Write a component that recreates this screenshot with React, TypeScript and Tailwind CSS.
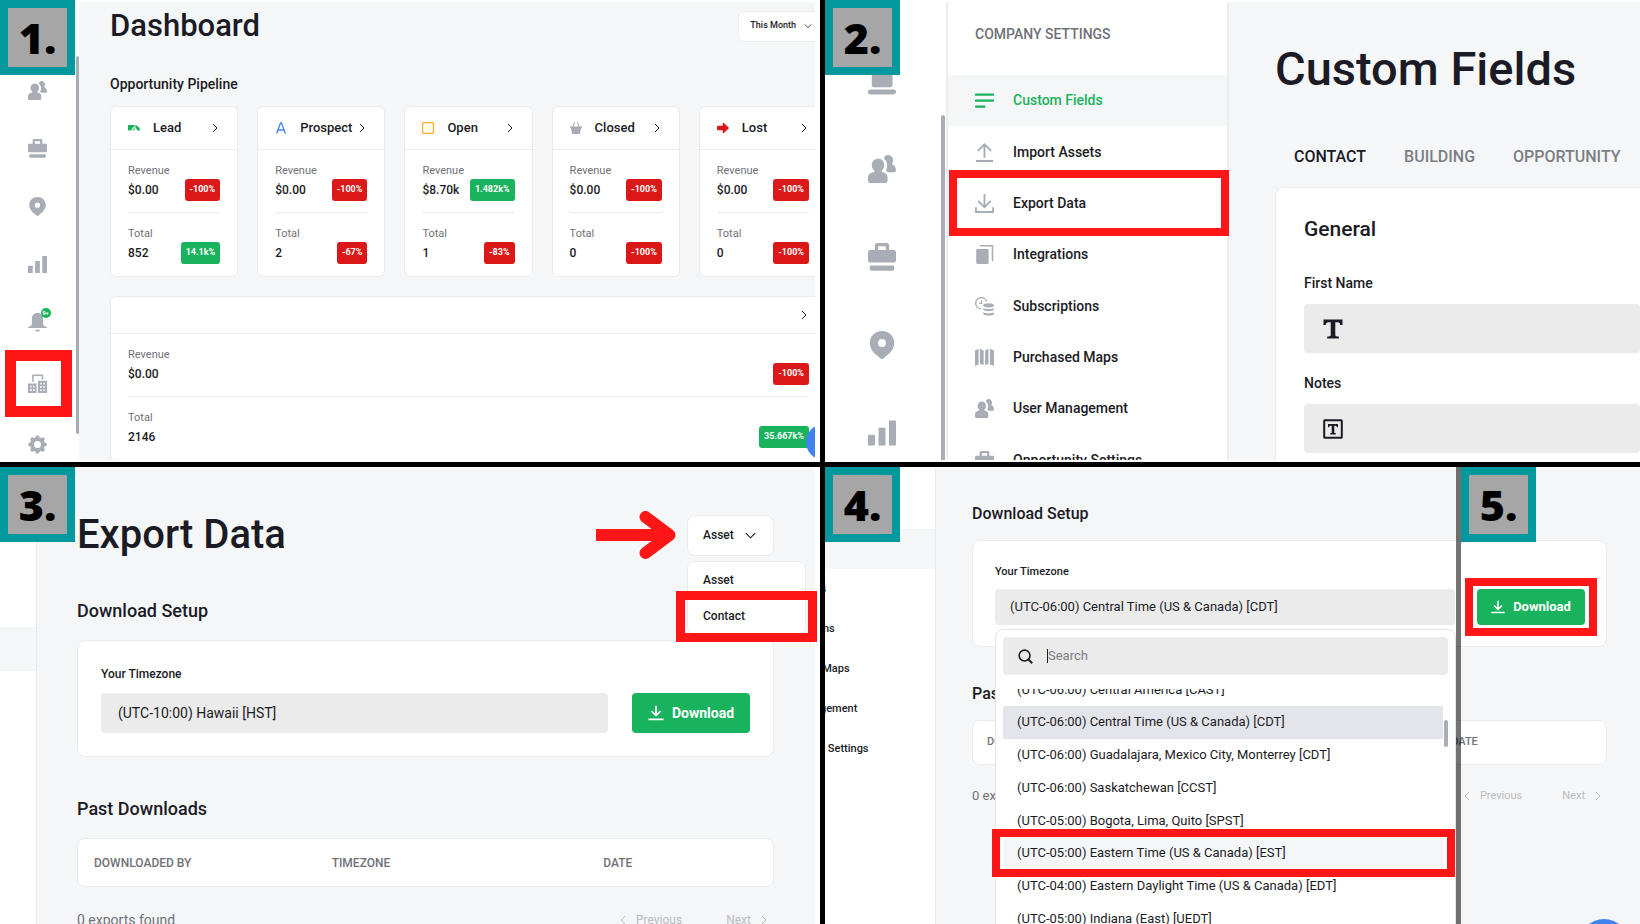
import type { ReactNode } from 'react';
import clsx from 'clsx';

/* ---------- Icons ---------- */

type IconProps = { className?: string };

function Svg({ className, children, box = '0 0 20 20' }: IconProps & { children: ReactNode; box?: string }) {
  return (
    <svg viewBox={box} className={clsx('shrink-0', className)} fill="currentColor" aria-hidden="true">
      {children}
    </svg>
  );
}

const UsersIcon = (p: IconProps) => (
  <Svg {...p}>
    <path d="M7.300 2.600C10 2.600 11.600 4.500 11.600 7.300c0 1.700-.8 3-1.700 3.700v1.100c2.500.5 4.100 1.700 4.100 4v2c0 1.100-.6 1.900-1.500 1.900h-11C.6 20 0 19.200 0 18.100v-2c0-2.300 1.700-3.500 4.500-4v-1.100c-1-.7-1.800-2-1.800-3.700 0-2.800 1.900-4.700 4.600-4.700z" />
    <path d="M14 0c2.400 0 3.900 1.700 3.900 3.800 0 1-.3 1.900-.8 2.600 1.800.9 2.900 2.400 2.900 4.300 0 1-.6 1.600-1.300 1.600h-4.500c-.4-.4-.8-.7-1.400-1 .6-1.100.9-2.400.9-3.900 0-1.900-.8-3.500-2.300-4.700C11.700 1 12.600 0 14 0z" />
  </Svg>
);

const BriefcaseIcon = (p: IconProps) => (
  <Svg {...p}>
    <path
      fillRule="evenodd"
      d="M6.500 0h7c.9 0 1.600.7 1.600 1.600V5h3.400c.8 0 1.500.7 1.500 1.500v6c0 .8-.7 1.500-1.500 1.500h-17C.7 14 0 13.300 0 12.500v-6C0 5.700.7 5 1.500 5h3.400V1.600C4.900.7 5.600 0 6.500 0zM7.300 2.300V5h5.400V2.300H7.300z"
    />
    <rect x="1.300" y="16" width="17.400" height="3.800" rx="1" />
  </Svg>
);

const PinIcon = (p: IconProps) => (
  <Svg {...p}>
    <path
      fillRule="evenodd"
      d="M10 0c5 0 8.700 3.700 8.700 8.500 0 4.300-2.700 7-5.500 9.200L11 19.600c-.6.500-1.400.5-2 0l-2.200-1.900C4 15.500 1.300 12.800 1.300 8.500 1.300 3.700 5 0 10 0zm0 5.800a2.800 2.800 0 1 0 0 5.600 2.800 2.800 0 0 0 0-5.600z"
    />
  </Svg>
);

const BarsIcon = (p: IconProps) => (
  <Svg {...p}>
    <rect x="0" y="11.200" width="5" height="7.800" rx=".4" />
    <rect x="7.500" y="6.300" width="5" height="12.700" rx=".4" />
    <rect x="15" y="1" width="5" height="18" rx=".4" />
  </Svg>
);

const BellIcon = (p: IconProps) => (
  <Svg {...p}>
    <path d="M10 0c3.900 0 5.900 2.600 5.900 6v5.200c0 1.500 1.200 2.400 3 3.200.7.300 1.100.7 1.100 1.400H0c0-.7.400-1.100 1.100-1.400 1.800-.8 3-1.700 3-3.200V6C4.100 2.600 6.100 0 10 0z" />
    <path d="M7.200 17.500h5.600c-.4 1.200-1.400 2-2.800 2s-2.400-.8-2.800-2z" />
  </Svg>
);

const BuildingsIcon = (p: IconProps) => (
  <Svg {...p}>
    <path d="M5.200 8.300V1.400h10v4.500" fill="none" stroke="currentColor" strokeWidth="1.600" />
    <path
      fillRule="evenodd"
      d="M0 10h9v10H0V10zm2.300 2.300v1.900h1.600v-1.900H2.300zm3 0v1.900h1.600v-1.900H5.300zm-3 3.600v1.900h1.600v-1.900H2.300zm3 0v1.900h1.600v-1.900H5.300z"
    />
    <path
      fillRule="evenodd"
      d="M10.500 7H20v13h-9.500V7zm2.300 2.200v1.800h1.700V9.200h-1.700zm3.300 0v1.800h1.700V9.200h-1.700zm-3.300 3.500v1.800h1.700v-1.800h-1.700zm3.300 0v1.800h1.700v-1.800h-1.700zm-3.300 3.500V18h1.700v-1.800h-1.700zm3.300 0V18h1.700v-1.800h-1.700z"
    />
  </Svg>
);

const GearIcon = (p: IconProps) => (
  <Svg {...p}>
    <circle cx="10" cy="10" r="5.700" fill="none" stroke="currentColor" strokeWidth="4" />
    {[0, 45, 90, 135, 180, 225, 270, 315].map((a) => (
      <path key={a} d="M7.400 3.500 8.600.4h2.800l1.200 3.100z" transform={`rotate(${a} 10 10)`} />
    ))}
  </Svg>
);

const LaptopIcon = (p: IconProps) => (
  <Svg {...p}>
    <rect x="2.700" y="2" width="14.800" height="12.500" rx="1.200" />
    <rect x="0" y="16" width="20" height="3.600" rx="1.700" />
  </Svg>
);

const LinesIcon = (p: IconProps) => (
  <Svg {...p}>
    <rect y="2.600" width="20" height="2.400" rx=".9" />
    <rect y="8.900" width="20" height="2.400" rx=".9" />
    <rect y="15.200" width="11" height="2.400" rx=".9" />
  </Svg>
);

const UploadIcon = (p: IconProps) => (
  <Svg {...p}>
    <path d="M10 15.500V2M3 8.300 10 1.500l7 6.800M1 19h18" fill="none" stroke="currentColor" strokeWidth="2" />
  </Svg>
);

const ExportIcon = (p: IconProps) => (
  <Svg {...p}>
    <path d="M10 0v13.500M3.300 7.300l6.700 6.500 6.700-6.500M1 14v5h18v-5" fill="none" stroke="currentColor" strokeWidth="2" />
  </Svg>
);

const CopyIcon = (p: IconProps) => (
  <Svg {...p}>
    <rect x="1.300" y="4.300" width="13" height="15.700" rx="1.300" />
    <path d="M5 .8h13.400V17" fill="none" stroke="currentColor" strokeWidth="1.600" />
  </Svg>
);

const SubscriptionIcon = (p: IconProps) => (
  <Svg {...p}>
    <path d="M6.500 12.500A5.900 5.900 0 1 1 12.300 5" fill="none" stroke="currentColor" strokeWidth="1.500" />
    <path d="M7 3.400v3.400H4.300" fill="none" stroke="currentColor" strokeWidth="1.300" />
    <ellipse cx="14.300" cy="8.800" rx="5.600" ry="2.300" />
    <path d="M8.700 11.500c1.500 1.500 9.700 1.500 11.200 0v1.900c-1 2-10.200 2-11.200 0zM8.700 16c1.500 1.500 9.700 1.500 11.200 0v1.800c-1 2.200-10.200 2.200-11.200 0z" />
  </Svg>
);

const MapIcon = (p: IconProps) => (
  <Svg {...p}>
    <path d="M0 2.500 3.800.8v16.500L0 19zM5.200.8l3.900 1.700V18l-3.900-1.200zM10.600 2.500l3.600-1.700v16L10.600 18zM15.700.8 20 2.500V19l-4.300-1.700z" />
  </Svg>
);

const DownloadIcon = (p: IconProps) => (
  <Svg {...p}>
    <path d="M10 1v12M4.300 7.800 10 13.300l5.700-5.500M.5 18h19" fill="none" stroke="currentColor" strokeWidth="2.200" />
  </Svg>
);

const ChevronRight = (p: IconProps) => (
  <Svg {...p} box="0 0 10 10">
    <path d="M3 1l4 4-4 4" fill="none" stroke="currentColor" />
  </Svg>
);

const ChevronLeft = (p: IconProps) => (
  <Svg {...p} box="0 0 10 10">
    <path d="M7 1 3 5l4 4" fill="none" stroke="currentColor" />
  </Svg>
);

const ChevronDown = (p: IconProps) => (
  <Svg {...p} box="0 0 10 10">
    <path d="M.7 2.900 5 7.100l4.300-4.200" fill="none" stroke="currentColor" />
  </Svg>
);

const SearchIcon = (p: IconProps) => (
  <Svg {...p} box="0 0 16 16">
    <circle cx="7" cy="7" r="5.800" fill="none" stroke="currentColor" strokeWidth="1.700" />
    <path d="m11.200 11.200 4 4" fill="none" stroke="currentColor" strokeWidth="1.900" />
  </Svg>
);

const LeadIcon = () => (
  <Svg className="size-3 text-[#18b35c]" box="0 0 12 12">
    <path d="M0 3h6.500v1.700L4.800 5.500 3.200 8.600H0zM7.200 3.200c2.700.2 4.800 2.400 4.800 5.400H9.500L7.200 5z" />
    <path d="M6.600 5.200v2L5.400 8.600H4.300z" />
  </Svg>
);

const ProspectIcon = () => (
  <Svg className="size-3 text-[#3f83f0]" box="0 0 12 12">
    <path d="M1.600 11.500 5.600.8h.8l4 10.700M3 8h6" fill="none" stroke="currentColor" strokeWidth="1.300" />
  </Svg>
);

const OpenIcon = () => (
  <Svg className="size-3 text-[#fdb022]" box="0 0 12 12">
    <rect x=".6" y=".6" width="10.800" height="10.800" fill="none" stroke="currentColor" strokeWidth="1.300" />
  </Svg>
);

const ClosedIcon = () => (
  <Svg className="size-3 text-[#a9adb5]" box="0 0 12 12">
    <path d="M0 4.500h12v1.300h-.7L9.800 12H2.200L.7 5.800H0z" />
    <path d="M2.700 5 4.600.5M9.300 5 7.400.5" fill="none" stroke="currentColor" strokeWidth="1.100" />
  </Svg>
);

const LostIcon = () => (
  <Svg className="size-3 text-[#dc1717]" box="0 0 12 12">
    <path d="M1.300 3.800h4.400V1.500c0-.6.600-.9 1-.5l5 4.400c.3.300.3.900 0 1.200l-5 4.400c-.4.400-1 .1-1-.5V8.200H1.300C.6 8.200 0 7.600 0 6.900V5.100c0-.7.600-1.300 1.300-1.300z" />
  </Svg>
);

const TextGlyph = () => (
  <Svg className="size-5 text-[#1b1b25]">
    <path d="M.5.500h19V6h-2.200c-.3-2-1-2.800-2.700-2.800H12.300v12.600c0 1 .5 1.500 2 1.600l1.500.1v2H4.200v-2l1.500-.1c1.500-.1 2-.6 2-1.600V3.200H5.400C3.700 3.200 3 4 2.700 6H.5z" />
  </Svg>
);

const TextAreaGlyph = () => (
  <Svg className="size-5 text-[#1b1b25]">
    <rect x="1.200" y="1.200" width="17.600" height="17.600" rx=".6" fill="none" stroke="currentColor" strokeWidth="2" />
    <path d="M5 5h10v3.200h-1.200c-.2-1-.6-1.400-1.400-1.400h-1.100v6.500c0 .6.300.8 1.500.9V15.500H7.200v-1.300c1.200-.1 1.500-.3 1.500-.9V6.800H7.600c-.8 0-1.200.4-1.400 1.400H5z" />
  </Svg>
);

/* ---------- Shared pieces ---------- */

function StepBadge({ n, className = 'left-0' }: { n: number; className?: string }) {
  return (
    <div
      className={clsx(
        "absolute top-0 z-30 flex size-[75px] items-center justify-center border-8 border-[#03989e] bg-[#a6a6a6] font-['Open_Sans',sans-serif] text-[43px] leading-none font-extrabold text-black",
        className,
      )}
    >
      {n}.
    </div>
  );
}

function Pager({ className }: { className: string }) {
  return (
    <div className={clsx('flex items-center text-[#b9bbbf]', className)}>
      <button className="flex items-center gap-2">
        <ChevronLeft className="size-[10px]" />
        Previous
      </button>
      <button className="flex items-center gap-2">
        Next
        <ChevronRight className="size-[10px]" />
      </button>
    </div>
  );
}

function DownloadsTable({ className }: { className: string }) {
  return (
    <table className="w-full table-fixed text-left">
      <thead>
        <tr className={clsx('text-[#6f7178]', className)}>
          <th className="w-[35%] font-medium">DOWNLOADED BY</th>
          <th className="w-[40%] font-medium">TIMEZONE</th>
          <th className="font-medium">DATE</th>
        </tr>
      </thead>
    </table>
  );
}

/* ---------- Step 1: dashboard ---------- */

function Badge({ value }: { value: string }) {
  return (
    <span
      className={clsx(
        'flex h-[22px] items-center rounded-[3px] px-[5px] text-[9px] font-bold text-white',
        value.startsWith('-') ? 'bg-[#dc1717]' : 'bg-[#18b35c]',
      )}
    >
      {value}
    </span>
  );
}

function Metric({ label, value, change }: { label: string; value: string; change: string }) {
  return (
    <div className="h-[63px] border-b border-[#ebebed] pt-[13px] last:border-0">
      <div className="text-[11px] leading-4 text-[#6f7178]">{label}</div>
      <div className="flex items-center justify-between text-[12px] font-medium">
        {value}
        <Badge value={change} />
      </div>
    </div>
  );
}

const stages = [
  { name: 'Lead', icon: <LeadIcon />, revenue: ['$0.00', '-100%'], total: ['852', '14.1k%'] },
  { name: 'Prospect', icon: <ProspectIcon />, revenue: ['$0.00', '-100%'], total: ['2', '-67%'] },
  { name: 'Open', icon: <OpenIcon />, revenue: ['$8.70k', '1.482k%'], total: ['1', '-83%'] },
  { name: 'Closed', icon: <ClosedIcon />, revenue: ['$0.00', '-100%'], total: ['0', '-100%'] },
  { name: 'Lost', icon: <LostIcon />, revenue: ['$0.00', '-100%'], total: ['0', '-100%'] },
];

function DashboardStep() {
  const item = 'flex h-[58px] items-center justify-center';
  return (
    <section className="relative flex overflow-hidden bg-white">
      <StepBadge n={1} />
      <nav className="relative w-[79px] shrink-0 pt-[61px] pr-[5px] text-[#a9adb5]">
        <ul>
          <li className={item}><UsersIcon className="size-[19px]" /></li>
          <li className={item}><BriefcaseIcon className="size-[19px]" /></li>
          <li className={item}><PinIcon className="size-[19px]" /></li>
          <li className={item}><BarsIcon className="size-[19px]" /></li>
          <li className={item}>
            <span className="relative">
              <BellIcon className="size-[19px]" />
              <span className="absolute -top-[5px] -right-[4px] flex size-[10px] items-center justify-center rounded-full bg-[#18b35c] text-[6px] font-bold text-white">
                9+
              </span>
            </span>
          </li>
          <li className="relative flex h-16 items-center justify-center">
            <BuildingsIcon className="size-[19px]" />
            <span className="absolute -top-px left-[5px] size-[67px] border-[11px] border-[#ff1616]" />
          </li>
          <li className={item}><GearIcon className="size-[19px]" /></li>
        </ul>
        <span className="absolute top-14 right-0 bottom-7 w-[3px] rounded-full bg-[#a9adb5]" />
      </nav>

      <div className="relative mt-[2px] mr-[5px] mb-[2px] min-w-0 flex-1 overflow-hidden bg-[#f5f6f8] pl-[31px]">
        <div className="-mr-3">
          <header className="flex items-center justify-between pt-[6px]">
            <h1 className="text-[31px] leading-9 font-medium">Dashboard</h1>
            <button className="flex h-[31px] items-center gap-2 rounded-md border border-[#ebebed] bg-white pr-[14px] pl-[11px] text-[9px] font-medium">
              This Month
              <ChevronDown className="size-2" />
            </button>
          </header>
          <h2 className="mt-[30px] text-[14px] leading-5 font-medium">Opportunity Pipeline</h2>
          <div className="mt-3 flex gap-[19px]">
            {stages.map((s) => (
              <article key={s.name} className="min-w-0 flex-1 rounded-md border border-[#ebebed] bg-white">
                <div className="flex h-[43px] items-center border-b border-[#ebebed] pr-[17px] pl-[17px]">
                  {s.icon}
                  <h3 className="ml-[13px] flex-1 text-[13px] font-medium">{s.name}</h3>
                  <ChevronRight className="size-[10px]" />
                </div>
                <div className="px-[17px]">
                  <Metric label="Revenue" value={s.revenue[0]} change={s.revenue[1]} />
                  <Metric label="Total" value={s.total[0]} change={s.total[1]} />
                </div>
              </article>
            ))}
          </div>
          <article className="mt-[19px] rounded-md border border-[#ebebed] bg-white">
            <div className="flex h-[37px] items-center justify-end border-b border-[#ebebed] pr-[17px]">
              <ChevronRight className="size-[10px]" />
            </div>
            <div className="px-[17px]">
              <Metric label="Revenue" value="$0.00" change="-100%" />
              <Metric label="Total" value="2146" change="35.667k%" />
            </div>
          </article>
        </div>
        <span className="absolute right-[-27px] bottom-0 size-[36px] rounded-full bg-[#3f83f0]" />
      </div>
    </section>
  );
}

/* ---------- Step 2: company settings ---------- */

const settings = [
  { label: 'Custom Fields', Icon: LinesIcon },
  { label: 'Import Assets', Icon: UploadIcon },
  { label: 'Export Data', Icon: ExportIcon },
  { label: 'Integrations', Icon: CopyIcon },
  { label: 'Subscriptions', Icon: SubscriptionIcon },
  { label: 'Purchased Maps', Icon: MapIcon },
  { label: 'User Management', Icon: UsersIcon },
  { label: 'Opportunity Settings', Icon: BriefcaseIcon },
];

function FieldRow({ label, children }: { label: string; children: ReactNode }) {
  return (
    <div className="mb-5">
      <div className="text-[14px] leading-5 font-medium">{label}</div>
      <div className="mt-[11px] flex h-[49px] items-center rounded-[4px] bg-[#ebebeb] pl-[19px]">{children}</div>
    </div>
  );
}

function SettingsStep() {
  const item = 'flex h-[88px] items-center justify-center';
  return (
    <section className="relative flex overflow-hidden border-l-5 border-black bg-white pb-[2px]">
      <StepBadge n={2} />
      <nav className="relative w-[121px] shrink-0 pt-[37px] pr-[7px] text-[#a9adb5]">
        <ul>
          <li className={item}><LaptopIcon className="size-7" /></li>
          <li className={item}><UsersIcon className="size-7" /></li>
          <li className={item}><BriefcaseIcon className="size-7" /></li>
          <li className={item}><PinIcon className="size-7" /></li>
          <li className={item}><BarsIcon className="size-7" /></li>
        </ul>
        <span className="absolute top-[115px] right-px bottom-0 w-[4px] rounded-t-full bg-[#a9adb5]" />
      </nav>
      <nav className="mt-[2px] w-[283px] shrink-0 overflow-y-clip border-x-2 border-[#ededef]">
        <h2 className="pt-[22px] pl-[27px] text-[14px] leading-5 font-medium text-[#6f7178]">COMPANY SETTINGS</h2>
        <ul className="mt-[31px] grid h-[411px] auto-rows-fr">
          {settings.map(({ label, Icon }, i) => (
            <li key={label} className={clsx('relative', i === 0 && 'bg-[#f5f6f8]')}>
              <a
                href="#"
                className={clsx(
                  'flex h-full items-center gap-[19px] pl-[27px] text-[14px] font-medium',
                  i === 0 && 'text-[#18b35c]',
                )}
              >
                <Icon className={clsx('size-[19px]', i !== 0 && 'text-[#a9adb5]')} />
                {label}
              </a>
              {label === 'Export Data' && (
                <span className="absolute -top-2 -right-[2px] left-px z-10 h-[66px] border-8 border-[#ff1616]" />
              )}
            </li>
          ))}
        </ul>
      </nav>
      <div className="mt-[2px] min-w-0 flex-1 overflow-hidden bg-[#f5f6f8] pl-[46px]">
        <h1 className="pt-[39px] text-[47px] leading-[56px] font-medium whitespace-nowrap">Custom Fields</h1>
        <div className="mt-[50px] flex gap-[38px] pl-[19px] text-[16px] leading-5 font-medium text-[#7c7e84]">
          <button className="text-[#1b1b25]">CONTACT</button>
          <button>BUILDING</button>
          <button>OPPORTUNITY</button>
        </div>
        <div className="mt-5 rounded-tl-lg border-t border-l border-[#ebebed] bg-white pt-[27px] pb-5 pl-7">
          <h2 className="mb-[30px] text-[21px] leading-7 font-medium">General</h2>
          <FieldRow label="First Name"><TextGlyph /></FieldRow>
          <FieldRow label="Notes"><TextAreaGlyph /></FieldRow>
        </div>
      </div>
    </section>
  );
}

/* ---------- Step 3: choose the export type ---------- */

function ExportStep() {
  return (
    <section className="relative flex overflow-hidden border-t-5 border-black bg-white">
      <StepBadge n={3} />
      <div className="w-9 shrink-0 pt-[160px]">
        <div className="h-11 bg-[#f5f6f8]" />
      </div>
      <div className="mt-[2px] mr-[5px] min-w-0 flex-1 border-l border-[#ebebed] bg-[#f5f6f8] pr-[41px] pl-10">
        <header className="relative flex items-center pt-[42px]">
          <h1 className="flex-1 text-[40px] leading-[48px] font-medium">Export Data</h1>
          <svg viewBox="0 0 80 48" className="mr-[11px] h-12 w-20" fill="none" stroke="#ff1616" strokeWidth="12" aria-hidden="true">
            <path d="M0 24h70" />
            <path d="M49.500 6 73.500 24 49.500 42" strokeLinecap="round" strokeLinejoin="round" />
          </svg>
          <div className="relative">
            <button className="flex h-[41px] w-[87px] items-center gap-[11px] rounded-lg border border-[#ebebed] bg-white pl-[15px] text-[12px] font-medium">
              Asset
              <ChevronDown className="size-[11px]" />
            </button>
            <ul className="absolute top-[46px] left-0 z-10 w-[119px] rounded-lg border border-[#ebebed] bg-white text-[12px] leading-9 font-medium">
              <li className="pl-[15px]">Asset</li>
              <li className="relative pl-[15px]">
                Contact
                <span className="absolute -top-[7px] -right-3 -left-3 h-[51px] border-[9px] border-[#ff1616]" />
              </li>
            </ul>
          </div>
        </header>

        <h2 className="mt-10 text-[18px] leading-6 font-medium">Download Setup</h2>
        <div className="mt-[17px] rounded-lg border border-[#ebebed] bg-white px-[23px] pt-[25px] pb-[23px]">
          <label htmlFor="timezone" className="block text-[12px] leading-4 font-medium">Your Timezone</label>
          <div className="mt-[11px] flex gap-6">
            <select id="timezone" className="h-10 min-w-0 flex-1 appearance-none rounded-[4px] bg-[#ebebeb] px-[17px] text-[14px]">
              <option>(UTC-10:00) Hawaii [HST]</option>
            </select>
            <button className="flex h-10 w-[118px] items-center justify-center gap-2 rounded-[4px] bg-[#18b35c] text-[14px] font-bold text-white">
              <DownloadIcon className="size-4" />
              Download
            </button>
          </div>
        </div>

        <h2 className="mt-10 text-[18px] leading-6 font-medium">Past Downloads</h2>
        <div className="mt-[17px] rounded-lg border border-[#ebebed] bg-white pl-4">
          <DownloadsTable className="h-[47px] text-[12px]" />
        </div>
        <div className="mt-[23px] flex justify-between text-[14px] leading-5 text-[#6f7178]">
          0 exports found
          <Pager className="gap-[44px] pr-[5px] text-[12px]" />
        </div>
      </div>
    </section>
  );
}

/* ---------- Steps 4 and 5: pick a timezone, download ---------- */

const zones = [
  '(UTC-06:00) Central America [CAST]',
  '(UTC-06:00) Central Time (US & Canada) [CDT]',
  '(UTC-06:00) Guadalajara, Mexico City, Monterrey [CDT]',
  '(UTC-06:00) Saskatchewan [CCST]',
  '(UTC-05:00) Bogota, Lima, Quito [SPST]',
  '(UTC-05:00) Eastern Time (US & Canada) [EST]',
  '(UTC-04:00) Eastern Daylight Time (US & Canada) [EDT]',
  '(UTC-05:00) Indiana (East) [UEDT]',
];

function ZoneMenu() {
  return (
    <div className="absolute top-10 -right-px left-0 z-10 rounded-lg border border-[#e6e6e8] bg-white px-[7px] pt-[7px]">
      <label className="relative flex h-[38px] items-center gap-[14px] rounded-[4px] bg-[#ebebeb] pl-[15px]">
        <SearchIcon className="size-[15px]" />
        <span className="h-[14px] w-px bg-[#1b1b25]" />
        <input
          aria-label="Search"
          placeholder="Search"
          className="-ml-[14px] min-w-0 flex-1 bg-transparent text-[13px] outline-none placeholder:text-[#7c7e84]"
        />
      </label>
      <div className="relative mt-[14px] overflow-hidden pr-[5px]">
        <ul className="-mt-4 grid h-[262px] auto-rows-fr text-[13px]">
          {zones.map((z, i) => (
            <li
              key={z}
              className={clsx('flex items-center pl-[14px]', i === 1 && 'bg-[#e4e5ea]', i === 5 && 'bg-[#f5f6f8]')}
            >
              {z}
            </li>
          ))}
        </ul>
        <span className="absolute top-[31px] right-0 h-[27px] w-1 rounded-full bg-[#a9adb5]" />
      </div>
      <span className="absolute top-[199px] right-0 -left-1 h-12 border-8 border-[#ff1616]" />
    </div>
  );
}

function TimezoneStep() {
  return (
    <section className="relative flex overflow-hidden border-t-5 border-l-5 border-black bg-white">
      <StepBadge n={4} />
      <ul className="w-[110px] shrink-0 overflow-hidden pt-[22px] text-[11px] leading-10 font-medium whitespace-nowrap">
        {settings.slice(1).map(({ label }) => (
          <li key={label} className={label === 'Export Data' ? 'bg-[#f5f6f8]' : undefined}>
            <a href="#" className="-ml-[58px] block">{label}</a>
          </li>
        ))}
      </ul>
      <div className="mt-[2px] min-w-0 flex-1 border-l border-[#ebebed] bg-[#f5f6f8] pr-[33px] pl-9">
        <h2 className="pt-[34px] text-[16px] leading-[22px] font-medium">Download Setup</h2>
        <div className="mt-[15px] rounded-lg border border-[#ebebed] bg-white pt-[24px] pr-[21px] pb-[21px] pl-[22px]">
          <div className="text-[11px] leading-[14px] font-medium">Your Timezone</div>
          <div className="mt-[10px] flex gap-[22px]">
            <div className="relative min-w-0 flex-1">
              <button className="h-9 w-full rounded-[4px] bg-[#ebebeb] px-[15px] text-left text-[13px]">
                (UTC-06:00) Central Time (US &amp; Canada) [CDT]
              </button>
              <ZoneMenu />
            </div>
            <div className="relative z-20">
              <button className="flex h-9 w-[108px] items-center justify-center gap-2 rounded-[4px] bg-[#18b35c] text-[13px] font-bold text-white">
                <DownloadIcon className="size-[14px]" />
                Download
              </button>
              <span className="absolute -inset-x-3 -inset-y-[11px] border-8 border-[#ff1616]" />
            </div>
          </div>
        </div>
        <h2 className="mt-[36px] text-[16px] leading-[22px] font-medium">Past Downloads</h2>
        <div className="mt-[15px] rounded-lg border border-[#ebebed] bg-white pl-[14px]">
          <DownloadsTable className="h-[43px] text-[11px]" />
        </div>
        <div className="mt-[22px] flex justify-between text-[13px] leading-[18px] text-[#6f7178]">
          0 exports found
          <Pager className="gap-10 pr-1 text-[11px]" />
        </div>
      </div>
      <span className="absolute inset-y-0 right-[179px] z-20 w-[5px] bg-black/55" />
      <StepBadge n={5} className="right-[104px]" />
      <span className="absolute right-[11px] -bottom-[45px] size-[50px] rounded-full bg-[#3f83f0]" />
    </section>
  );
}

export default function App() {
  return (
    <main className="grid h-screen grid-cols-2 grid-rows-2 overflow-hidden font-['Roboto','Liberation_Sans',sans-serif] text-[#1b1b25]">
      <DashboardStep />
      <SettingsStep />
      <ExportStep />
      <TimezoneStep />
    </main>
  );
}
